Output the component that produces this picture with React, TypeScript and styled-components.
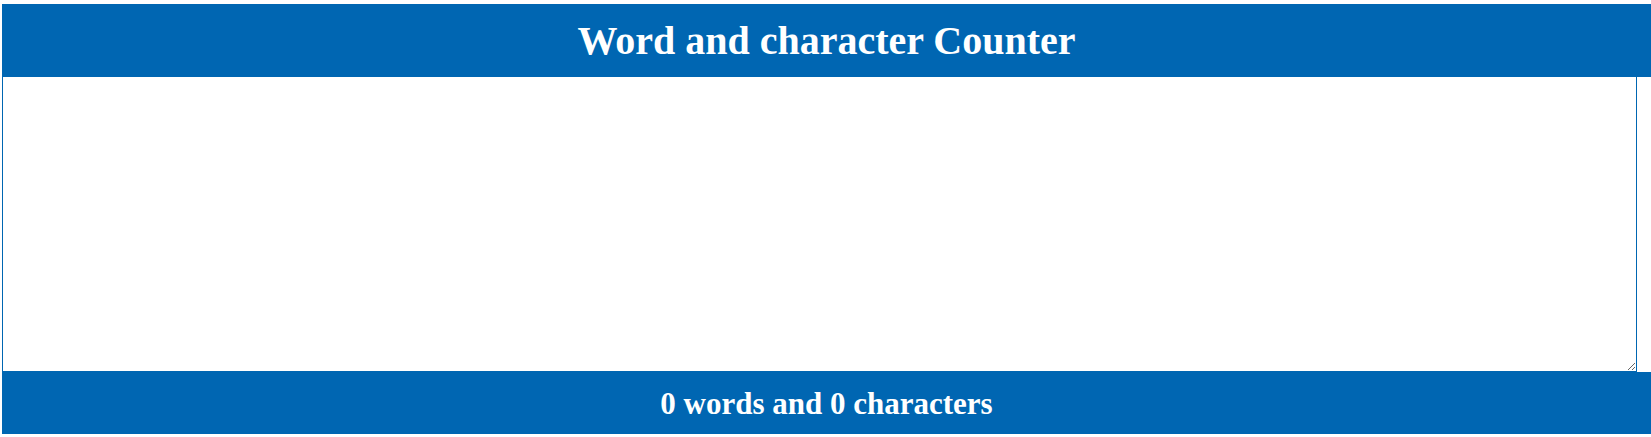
import React, { useState } from "react";
import styled, { createGlobalStyle } from "styled-components";

const GlobalStyle = createGlobalStyle`
  html, body {
    margin: 0;
    padding: 0;
    background: #ffffff;
  }
  body {
    font-family: "Liberation Serif", "Times New Roman", serif;
  }
`;

const Page = styled.div`
  display: flex;
  flex-direction: column;
  align-items: flex-start;
  padding: 4px 0 0 2px;
`;

const Header = styled.header`
  box-sizing: border-box;
  width: 100%;
  height: 73px;
  background: #0066b2;
  display: flex;
  align-items: center;
  justify-content: center;
`;

const Title = styled.h1`
  margin: 0;
  color: #ffffff;
  font-family: "Liberation Serif", "Times New Roman", serif;
  font-weight: bold;
  font-size: 40px;
  line-height: 1;
`;

const TextArea = styled.textarea`
  box-sizing: border-box;
  display: block;
  width: 1635px;
  height: 295px;
  margin: 0;
  border: 1px solid #0066b2;
  border-top: none;
  outline: none;
  padding: 2px;
  font-family: "Liberation Mono", monospace;
  font-size: 13px;
`;

const Footer = styled.footer`
  box-sizing: border-box;
  width: 100%;
  height: 62px;
  background: #0066b2;
  display: flex;
  align-items: center;
  justify-content: center;
`;

const Count = styled.h2`
  margin: 0;
  color: #ffffff;
  font-family: "Liberation Serif", "Times New Roman", serif;
  font-weight: bold;
  font-size: 31px;
  line-height: 1;
`;

export default function App() {
  const [text, setText] = useState("");
  const words = text.trim() ? text.trim().split(/\s+/).length : 0;
  const chars = text.length;
  return (
    <>
      <GlobalStyle />
      <Page>
        <Header>
          <Title>Word and character Counter</Title>
        </Header>
        <TextArea value={text} onChange={(e) => setText(e.target.value)} />
        <Footer>
          <Count>
            {words} words and {chars} characters
          </Count>
        </Footer>
      </Page>
    </>
  );
}
